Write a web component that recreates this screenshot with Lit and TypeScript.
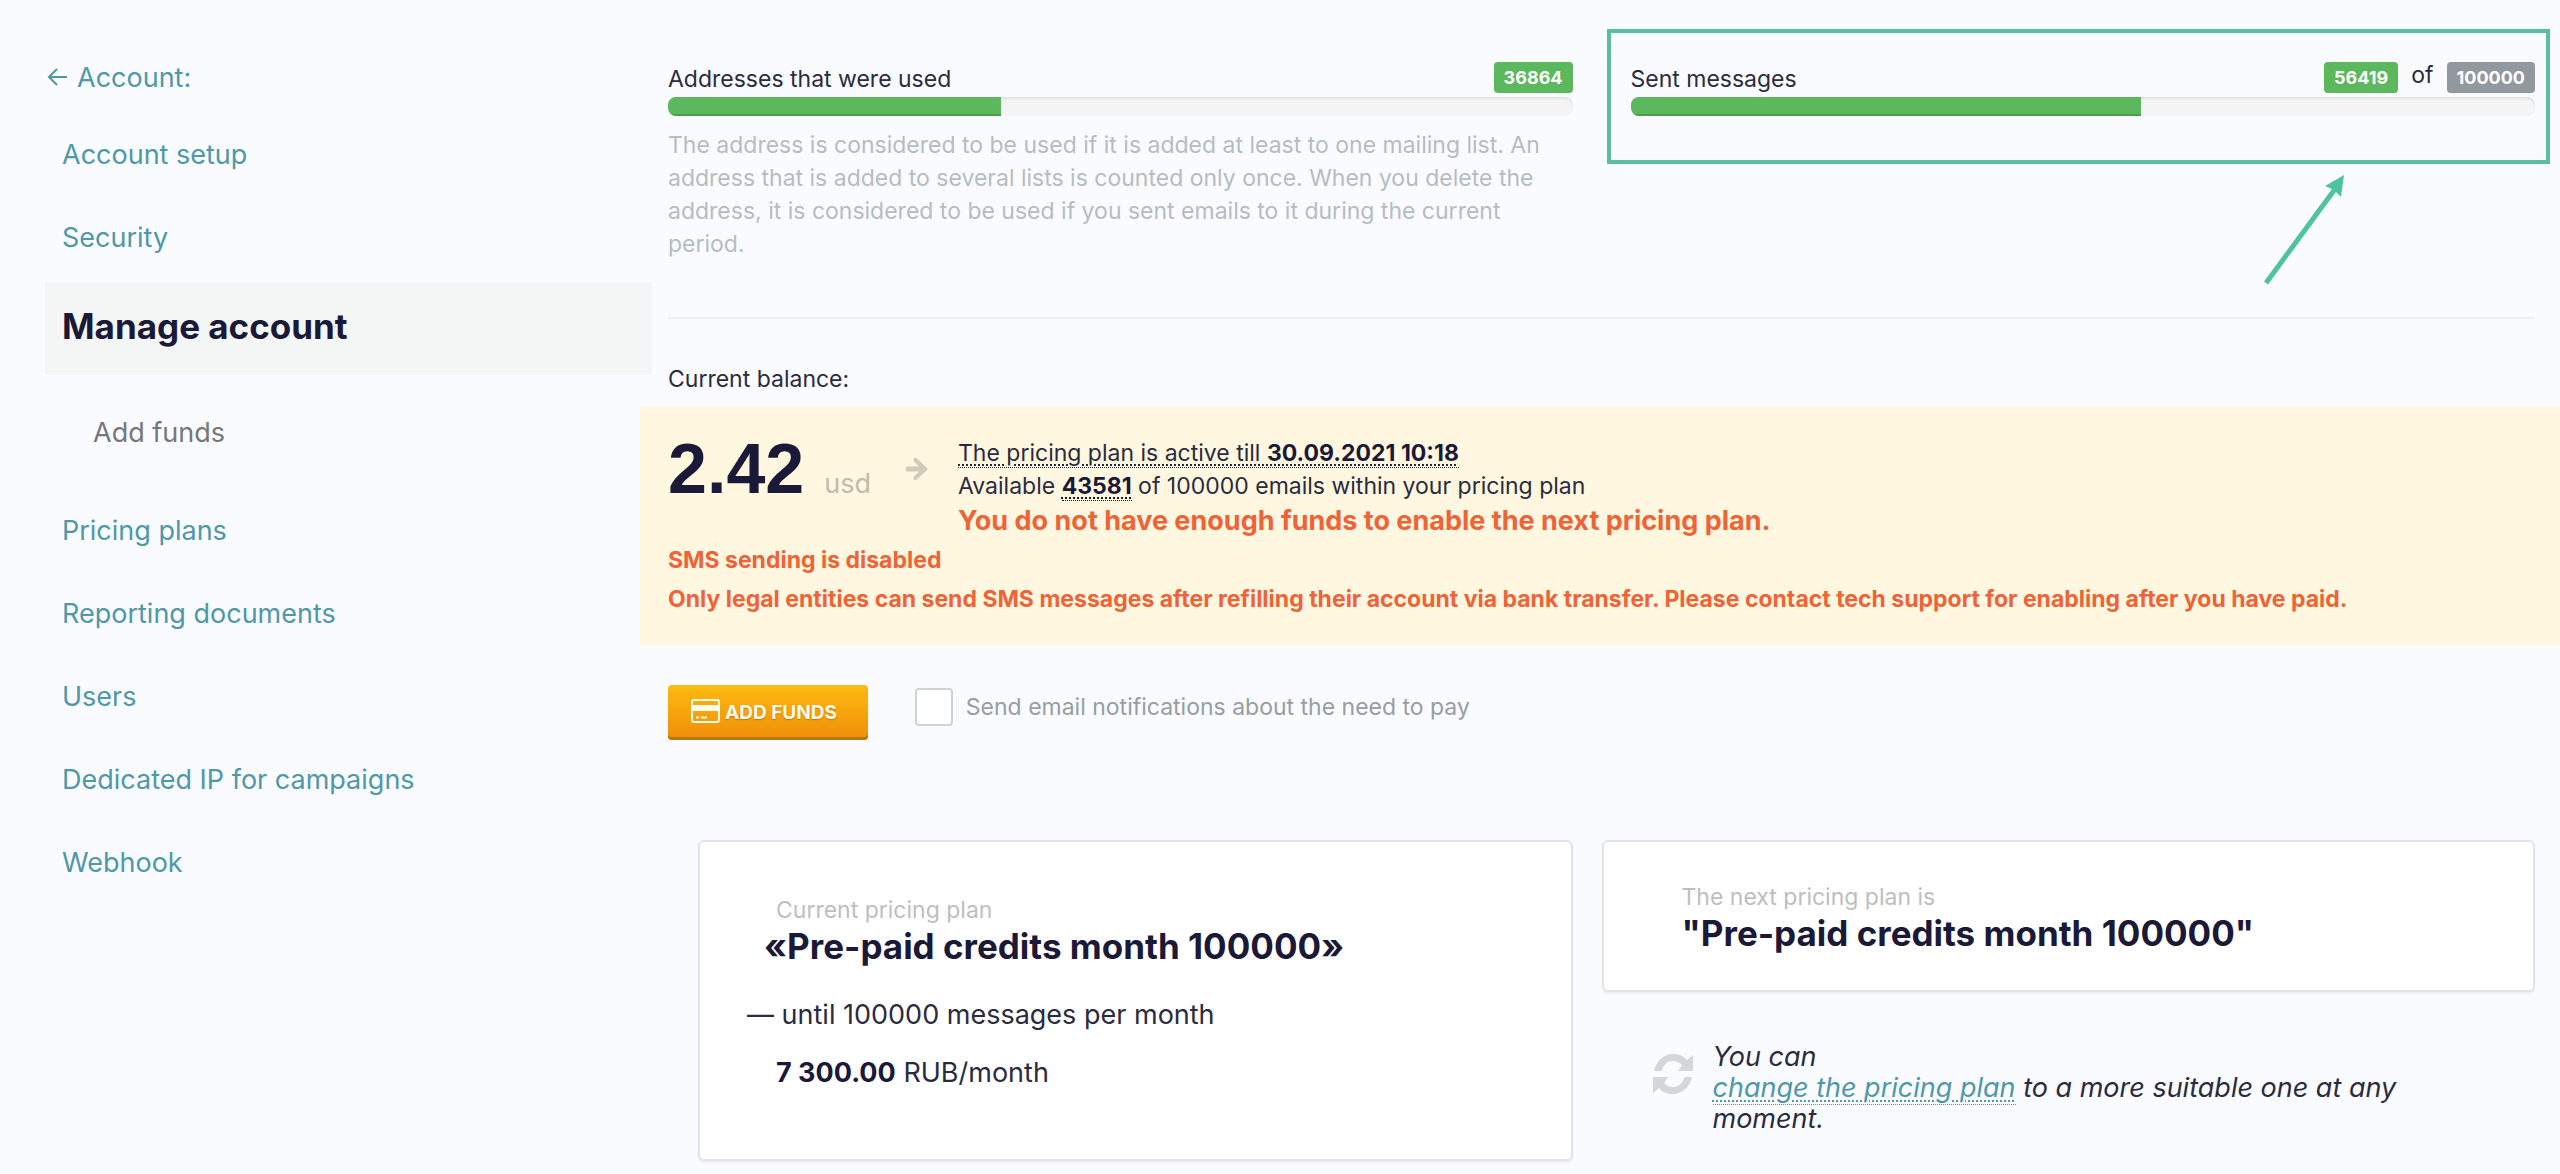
import { LitElement, html, css, svg } from "lit";
import { customElement, property } from "lit/decorators.js";
import { classMap } from "lit/directives/class-map.js";

interface NavItem {
  label: string;
  kind?: "current" | "sub";
}

const NAV: NavItem[] = [
  { label: "Account setup" },
  { label: "Security" },
  { label: "Manage account", kind: "current" },
  { label: "Add funds", kind: "sub" },
  { label: "Pricing plans" },
  { label: "Reporting documents" },
  { label: "Users" },
  { label: "Dedicated IP for campaigns" },
  { label: "Webhook" },
];

@customElement("account-nav")
class AccountNav extends LitElement {
  static styles = css`
    :host {
      display: block;
      padding: 41px 0 0 45px;
      font-size: 27px;
    }
    a {
      color: #4f98a8;
      text-decoration: none;
    }
    .back {
      display: flex;
      align-items: center;
      gap: 10px;
      height: 72px;
    }
    .back-icon {
      width: 22px;
      height: 22px;
    }
    .list {
      list-style: none;
      margin: 0;
      padding: 0;
    }
    .item {
      display: flex;
      align-items: center;
      height: 83px;
      padding-left: 17px;
    }
    .item.current {
      box-sizing: border-box;
      height: 93px;
      margin: 3px -12px 0 0;
      padding-bottom: 4px;
      background: #f4f6f5;
    }
    .item.current a {
      color: #1a1938;
      font-size: 35px;
      font-weight: 700;
    }
    .item.sub {
      height: 114px;
      padding-left: 48px;
    }
    .item.sub a {
      color: #75777a;
    }
  `;

  render() {
    return html`
      <nav aria-label="Account">
        <a class="back" href="#account">
          <svg class="back-icon" viewBox="0 0 22 22" fill="none" stroke="currentColor" stroke-width="2" aria-hidden="true">
            <path d="M22 11H4M12 3L4 11L12 19" />
          </svg>
          <span>Account:</span>
        </a>
        <ul class="list">
          ${NAV.map(
            (n) => html`<li class=${classMap({ item: true, current: n.kind === "current", sub: n.kind === "sub" })}>
              <a href="#${n.label.toLowerCase().replace(/ /g, "-")}">${n.label}</a>
            </li>`
          )}
        </ul>
      </nav>
    `;
  }
}

@customElement("usage-meter")
class UsageMeter extends LitElement {
  @property() label = "";
  @property({ type: Number }) used = 0;
  @property({ type: Number }) total = 0;
  @property({ type: Boolean }) limited = false;

  static styles = css`
    :host {
      display: block;
    }
    .head {
      display: flex;
      justify-content: space-between;
      align-items: center;
      height: 31px;
      margin-bottom: 4px;
    }
    .label {
      padding-top: 3px;
    }
    .counts {
      display: flex;
      align-items: center;
      gap: 13px;
    }
    .of {
      padding-bottom: 4px;
    }
    .badge {
      padding: 0 10px;
      border-radius: 4px;
      background: #5cb85c;
      color: #fff;
      font-size: 18px;
      font-weight: 700;
      line-height: 31px;
    }
    .badge.total {
      background: #92999e;
    }
    .track {
      height: 19px;
      overflow: hidden;
      border-radius: 8px;
      background: #f4f4f4;
      box-shadow: inset 0 2px 2px rgba(0, 0, 0, 0.08);
    }
    .fill {
      height: 100%;
      background: #5cb85c;
      box-shadow: inset 0 -2px 0 rgba(0, 0, 0, 0.15);
    }
  `;

  render() {
    const share = (this.used / this.total) * 100;
    return html`
      <div class="head">
        <span class="label" id="label">${this.label}</span>
        <span class="counts">
          <span class="badge">${this.used}</span>
          ${this.limited ? html`<span class="of">of</span><span class="badge total">${this.total}</span>` : ""}
        </span>
      </div>
      <div class="track" role="progressbar" aria-labelledby="label" aria-valuenow=${this.used} aria-valuemax=${this.total}>
        <div class="fill" style="width:${share}%"></div>
      </div>
    `;
  }
}

const arrowIcon = svg`<path d="M0 9.500H13L8 4.500Q6.500 3 8 1.500Q9.500 0 11 1.500L22 12L11 22.500Q9.500 24 8 22.500Q6.500 21 8 19.500L13 14.500H0Z" />`;

@customElement("app-root")
class AppRoot extends LitElement {
  static styles = css`
    :host {
      display: grid;
      grid-template-columns: 1fr 3fr;
      min-height: 100vh;
      overflow: hidden;
      background: #f9fbff;
      color: #2b2b3f;
      font-family: Inter, "Liberation Sans", sans-serif;
      font-size: 23px;
      line-height: 33px;
    }
    p,
    h2 {
      margin: 0;
    }
    b,
    h2 {
      color: #1a1938;
      font-weight: 700;
    }
    .main {
      padding: 62px 0 12px;
    }
    .columns,
    .divider,
    .caption,
    .actions {
      margin-left: 28px;
      margin-right: 25px;
    }
    .columns {
      display: grid;
      grid-template-columns: 1fr 1fr;
      gap: 58px;
      align-items: start;
    }
    .hint {
      margin-top: 13px;
      color: #b5bdc2;
    }
    .sent {
      position: relative;
    }
    .highlight {
      position: absolute;
      inset: -33px -15px -48px -24px;
      border: 4px solid #5abfa0;
      pointer-events: none;
    }
    .pointer {
      position: absolute;
      top: 112px;
      right: 188px;
      width: 84px;
      height: 112px;
      color: #4fc3a1;
    }
    .divider {
      height: 2px;
      margin-top: 56px;
      margin-bottom: 44px;
      border: 0;
      background: #eef0f4;
    }
    .balance {
      margin-top: 11px;
      padding: 30px 25px 26px 28px;
      background: #fff7df;
    }
    .summary {
      display: flex;
      margin-bottom: 3px;
    }
    .amount {
      display: flex;
      align-items: baseline;
      gap: 20px;
      min-width: 238px;
      line-height: 64px;
    }
    .sum {
      font-family: "Liberation Sans", sans-serif;
      font-size: 70px;
      font-weight: 700;
      color: #1a1938;
    }
    .currency {
      font-size: 27px;
      color: #c0bbae;
    }
    .arrow {
      width: 22px;
      height: 24px;
      margin: 20px 30px 0 0;
      fill: #d1cbb9;
    }
    .dotted {
      border-bottom: 1px dotted currentColor;
      text-decoration: underline dotted 2px;
      text-underline-offset: 3px;
    }
    .alert {
      color: #ee6337;
      font-weight: 700;
      line-height: 39px;
    }
    .alert.large {
      font-size: 27px;
      line-height: 35px;
    }
    .actions {
      display: flex;
      align-items: flex-start;
      gap: 47px;
      margin-top: 40px;
      margin-bottom: 100px;
    }
    .add {
      display: flex;
      align-items: center;
      gap: 5px;
      height: 55px;
      padding: 0 31px 0 23px;
      border: 0;
      border-radius: 4px;
      background: linear-gradient(#fdbb10, #f08c0a);
      box-shadow: inset 0 -3px 0 #b87514;
      color: #fffbea;
      font: 700 19px/33px Inter, "Liberation Sans", sans-serif;
      text-shadow: 0 1px 1px rgba(150, 80, 0, 0.5);
    }
    .card-icon {
      width: 29px;
      height: 24px;
      margin-bottom: 4px;
    }
    .notify {
      display: flex;
      align-items: center;
      gap: 13px;
      margin-top: 3px;
      color: #969ea3;
    }
    .check {
      appearance: none;
      box-sizing: border-box;
      width: 38px;
      height: 38px;
      margin: 0;
      border: 2px solid #d0d2d5;
      border-radius: 4px;
      background: #fff;
    }
    .card {
      border: 2px solid #e2e3e5;
      border-radius: 6px;
      background: #fff;
      box-shadow: 0 2px 2px rgba(0, 0, 0, 0.05);
    }
    .card.now {
      margin-left: 30px;
      padding: 52px 20px 57px 76px;
    }
    .next {
      margin-left: -29px;
    }
    .card.upcoming {
      padding: 39px 20px 37px 78px;
    }
    .kicker {
      color: #bcbebf;
    }
    .plan {
      font-size: 35px;
      line-height: 39px;
    }
    .now .plan {
      margin: 0 0 20px -12px;
    }
    .terms {
      font-size: 27px;
      line-height: 58px;
    }
    .terms.dash {
      margin-left: -29px;
    }
    .change {
      display: flex;
      gap: 20px;
      padding: 49px 60px 0 51px;
      font-size: 27px;
      font-style: italic;
      line-height: 31px;
    }
    .refresh {
      flex: none;
      width: 40px;
      height: 40px;
      margin-top: 13px;
      fill: #d3d7d9;
    }
    .link {
      color: #4f98a8;
    }
  `;

  render() {
    return html`
      <account-nav></account-nav>
      <main class="main">
        <div class="columns">
          <section>
            <usage-meter label="Addresses that were used" .used=${36864} .total=${100000}></usage-meter>
            <p class="hint">
              The address is considered to be used if it is added at least to one mailing list. An address that is added
              to several lists is counted only once. When you delete the address, it is considered to be used if you
              sent emails to it during the current period.
            </p>
          </section>
          <section class="sent">
            <usage-meter label="Sent messages" .used=${56419} .total=${100000} limited></usage-meter>
            <div class="highlight"></div>
            <svg class="pointer" viewBox="0 0 84 112" aria-hidden="true">
              <path d="M3 109L72 15" fill="none" stroke="currentColor" stroke-width="5" />
              <path d="M81 1L62 12L69 15L74 19L78 23Z" fill="currentColor" />
            </svg>
          </section>
        </div>
        <hr class="divider" />
        <p class="caption">Current balance:</p>
        <section class="balance">
          <div class="summary">
            <div class="amount"><span class="sum">2.42</span><span class="currency">usd</span></div>
            <svg class="arrow" viewBox="0 0 22 24" aria-hidden="true">${arrowIcon}</svg>
            <div>
              <p><span class="dotted">The pricing plan is active till <b>30.09.2021 10:18</b></span></p>
              <p>Available <b class="dotted">43581</b> of 100000 emails within your pricing plan</p>
              <p class="alert large">You do not have enough funds to enable the next pricing plan.</p>
            </div>
          </div>
          <p class="alert">SMS sending is disabled</p>
          <p class="alert">
            Only legal entities can send SMS messages after refilling their account via bank transfer. Please contact
            tech support for enabling after you have paid.
          </p>
        </section>
        <div class="actions">
          <button class="add" type="button">
            <svg class="card-icon" viewBox="0 0 29 24" aria-hidden="true">
              <rect x="1" y="1" width="27" height="22" rx="2" fill="none" stroke="currentColor" stroke-width="2" />
              <path d="M1 6H28V12H1ZM5 17.500H8V19.500H5ZM10 17.500H16V19.500H10Z" fill="currentColor" />
            </svg>
            <span>ADD FUNDS</span>
          </button>
          <label class="notify">
            <input class="check" type="checkbox" />
            <span>Send email notifications about the need to pay</span>
          </label>
        </div>
        <div class="columns">
          <section class="card now">
            <p class="kicker">Current pricing plan</p>
            <h2 class="plan">«Pre-paid credits month 100000»</h2>
            <p class="terms dash">— until 100000 messages per month</p>
            <p class="terms"><b>7 300.00</b> RUB/month</p>
          </section>
          <section class="next">
            <div class="card upcoming">
              <p class="kicker">The next pricing plan is</p>
              <h2 class="plan">"Pre-paid credits month 100000"</h2>
            </div>
            <div class="change">
              <svg class="refresh" viewBox="0 0 40 40" aria-hidden="true">
                <path d="M1 17C3 7 11 0 20 0C26 0 30 2 34 6L40 1V17H25L29 11C26 8 23 7 20 7C14 7 10 11 8.500 17Z" />
                <path d="M39 23C37 33 29 40 20 40C14 40 10 38 6 34L0 39V23H15L11 29C14 32 17 33 20 33C26 33 30 29 31.500 23Z" />
              </svg>
              <p>
                <span>You can</span><br />
                <a class="link dotted" href="#pricing-plans">change the pricing plan</a>
                <span>to a more suitable one at any</span>
                <span>moment.</span>
              </p>
            </div>
          </section>
        </div>
      </main>
    `;
  }
}
